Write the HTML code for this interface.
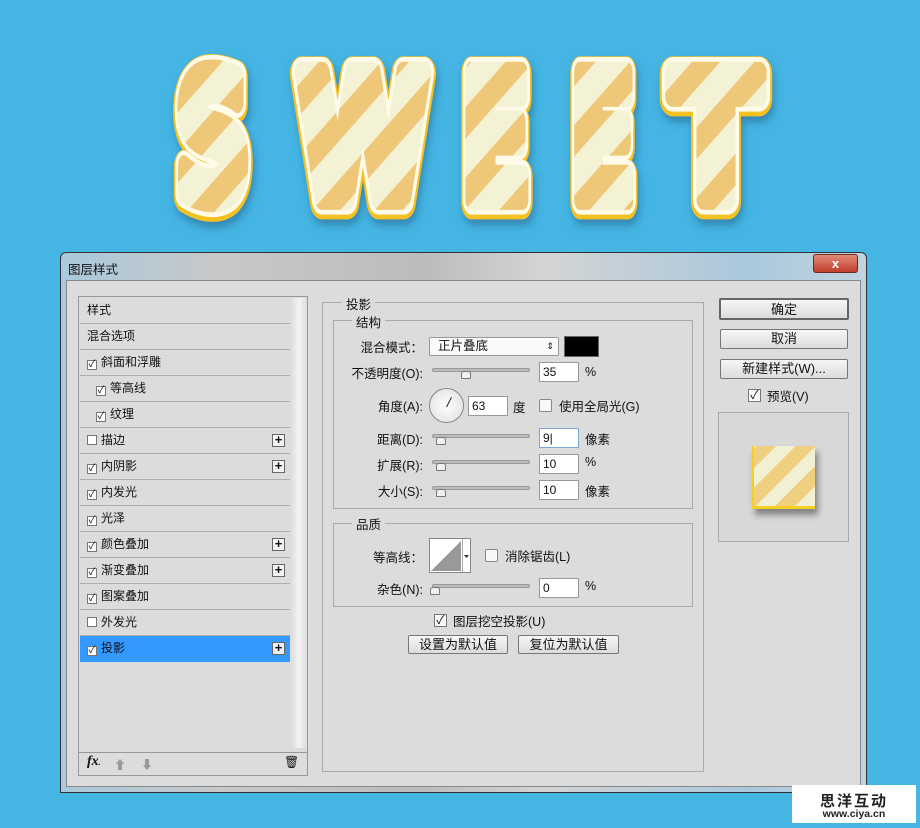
<!DOCTYPE html>
<html><head><meta charset="utf-8"><style>
*{margin:0;padding:0;box-sizing:border-box}
body{width:920px;height:828px;background:#45b5e3;position:relative;overflow:hidden;font-family:"Liberation Sans","Noto Sans CJK SC",sans-serif;font-size:12px;color:#111}
.a{position:absolute}
.row{position:absolute;left:80px;width:210px;height:26px;border-bottom:1px solid #aeaeae;line-height:25px;padding-left:7px}
.cb{display:inline-block;width:10px;height:10px;border:1px solid #777;background:#fff;vertical-align:-1px;margin-right:4px;font-size:10px;line-height:8px;text-align:center}
.plus{position:absolute;right:5px;top:6px;width:13px;height:13px;border:1px solid #666;background:#f4f4f4;font-size:13px;line-height:10px;text-align:center;font-weight:bold}
.btn{position:absolute;border:1px solid #777;border-radius:2px;background:linear-gradient(#f6f6f6,#dcdcdc);text-align:center;font-size:13px}
.lbl{position:absolute;text-align:right;width:95px;font-size:12.5px}
.sl{position:absolute;left:432px;width:98px;height:4px;border-radius:2px;background:#bbb;border:1px solid #999}
.th{position:absolute;width:10px;height:8px;border:1px solid #777;background:#f0f0f0;border-radius:3px 3px 1px 1px}
.inp{position:absolute;left:539px;width:40px;height:20px;background:#fff;border:1px solid #999;padding-left:3px;line-height:18px;font-size:12px}
.unit{position:absolute;left:585px;font-size:12.5px}
</style></head><body>
<svg class="a" style="left:0;top:0" width="920" height="240">
<defs>
<pattern id="st" width="40" height="40" patternUnits="userSpaceOnUse" patternTransform="rotate(-40)">
<rect width="40" height="40" fill="#f4f2d4"/><rect width="40" height="18" fill="#eec878"/></pattern>
<filter id="sh"><feDropShadow dx="2" dy="6" stdDeviation="4" flood-color="#1a5a80" flood-opacity="0.5"/></filter>
<g id="t" font-family="DejaVu Sans" font-weight="bold" font-size="130" transform="scale(1,1.35)">
<text x="176" y="148" textLength="74" lengthAdjust="spacingAndGlyphs">S</text>
<text x="298" y="148" textLength="130" lengthAdjust="spacingAndGlyphs">W</text>
<text x="462" y="148" textLength="68" lengthAdjust="spacingAndGlyphs">E</text>
<text x="571" y="148" textLength="64" lengthAdjust="spacingAndGlyphs">E</text>
<text x="672" y="148" textLength="88" lengthAdjust="spacingAndGlyphs">T</text></g>
</defs>
<g filter="url(#sh)" stroke-linejoin="round" stroke-linecap="round">
<use href="#t" stroke="#f5c020" stroke-width="26" fill="#f5c020" transform="translate(0,2)"/>
<use href="#t" stroke="#fffbe8" stroke-width="22" fill="#fffbe8"/>
<use href="#t" stroke="url(#st)" stroke-width="15" fill="url(#st)"/>
</g></svg>

<!-- window -->
<div class="a" style="left:60px;top:252px;width:807px;height:541px;border:1px solid #333;border-radius:6px 6px 0 0;background:linear-gradient(90deg,#a9c9dc,#c8c8c8 20%,#bcbcbc 45%,#d4d4d4 60%,#aac8dc 85%,#c0d4e0)"></div>
<div class="a" style="left:68px;top:259px;font-size:12.5px">图层样式</div>
<div class="a" style="left:813px;top:254px;width:45px;height:19px;border:1px solid #6b2a20;border-radius:3px;background:linear-gradient(#e08a78,#c0402c);color:#fff;text-align:center;font-weight:bold;font-size:13px;line-height:17px">x</div>
<div class="a" style="left:66px;top:280px;width:795px;height:507px;background:#dcdcdc;border:1px solid #888"></div>

<!-- left list -->
<div class="a" style="left:78px;top:296px;width:230px;height:480px;border:1px solid #999;background:#dcdcdc"></div>
<div class="a" style="left:291px;top:298px;width:16px;height:450px;background:linear-gradient(90deg,#dcdcdc,#f4f4f4,#dcdcdc)"></div>
<div class="row" style="top:298px">样式</div>
<div class="row" style="top:324px">混合选项</div>
<div class="row" style="top:350px"><span class="cb">✓</span>斜面和浮雕</div>
<div class="row" style="top:376px;padding-left:16px"><span class="cb">✓</span>等高线</div>
<div class="row" style="top:402px;padding-left:16px"><span class="cb">✓</span>纹理</div>
<div class="row" style="top:428px"><span class="cb"></span>描边<span class="plus">+</span></div>
<div class="row" style="top:454px"><span class="cb">✓</span>内阴影<span class="plus">+</span></div>
<div class="row" style="top:480px"><span class="cb">✓</span>内发光</div>
<div class="row" style="top:506px"><span class="cb">✓</span>光泽</div>
<div class="row" style="top:532px"><span class="cb">✓</span>颜色叠加<span class="plus">+</span></div>
<div class="row" style="top:558px"><span class="cb">✓</span>渐变叠加<span class="plus">+</span></div>
<div class="row" style="top:584px"><span class="cb">✓</span>图案叠加</div>
<div class="row" style="top:610px"><span class="cb"></span>外发光</div>
<div class="row" style="top:636px;background:#3399ff;border-bottom:none"><span class="cb">✓</span>投影<span class="plus" style="background:#e8f0ff">+</span></div>
<div class="a" style="left:79px;top:752px;width:228px;border-top:1px solid #999"></div>
<div class="a" style="left:87px;top:754px;font-family:'Liberation Serif',serif;font-style:italic;font-weight:bold;font-size:14px">fx<span style="font-size:8px">.</span></div>
<div class="a" style="left:114px;top:756px;color:#999;font-size:12px">⬆</div>
<div class="a" style="left:141px;top:756px;color:#999;font-size:12px">⬇</div>
<div class="a" style="left:284px;top:755px;font-size:12px">🗑</div>

<!-- middle -->
<div class="a" style="left:322px;top:302px;width:382px;height:470px;border:1px solid #aaa"></div>
<div class="a" style="left:342px;top:294px;background:#dcdcdc;padding:0 4px;font-size:12.5px">投影</div>
<div class="a" style="left:333px;top:320px;width:360px;height:189px;border:1px solid #aaa"></div>
<div class="a" style="left:352px;top:312px;background:#dcdcdc;padding:0 4px;font-size:12.5px">结构</div>
<div class="lbl" style="left:328px;top:337px">混合模式：</div>
<div class="a" style="left:429px;top:337px;width:130px;height:19px;border:1px solid #999;border-radius:2px;background:#fafafa;padding-left:8px;line-height:17px;font-size:12.5px">正片叠底<span style="position:absolute;right:4px;font-size:9px">⇕</span></div>
<div class="a" style="left:564px;top:336px;width:35px;height:21px;background:#000;border:1px solid #666"></div>
<div class="lbl" style="left:328px;top:363px">不透明度(O):</div>
<div class="sl" style="top:368px"></div><div class="th" style="left:461px;top:371px"></div>
<div class="inp" style="top:362px">35</div><div class="unit" style="top:365px">%</div>
<div class="lbl" style="left:328px;top:396px">角度(A):</div>
<div class="a" style="left:429px;top:388px;width:35px;height:35px;border-radius:50%;border:1px solid #888;background:radial-gradient(#fff,#ddd)"></div>
<div class="a" style="left:446px;top:396px;width:1px;height:11px;background:#222;transform:rotate(27deg);transform-origin:bottom"></div>
<div class="inp" style="left:468px;top:396px">63</div>
<div class="a" style="left:513px;top:397px;font-size:12.5px">度</div>
<div class="a" style="left:539px;top:399px;width:13px;height:13px;border:1px solid #888;background:#f8f8f8;border-radius:2px"></div>
<div class="a" style="left:559px;top:396px;font-size:12.5px">使用全局光(G)</div>
<div class="lbl" style="left:328px;top:429px">距离(D):</div>
<div class="sl" style="top:434px"></div><div class="th" style="left:436px;top:437px"></div>
<div class="inp" style="top:428px;border-color:#7aa6d8">9|</div><div class="unit" style="top:429px">像素</div>
<div class="lbl" style="left:328px;top:455px">扩展(R):</div>
<div class="sl" style="top:460px"></div><div class="th" style="left:436px;top:463px"></div>
<div class="inp" style="top:454px">10</div><div class="unit" style="top:455px">%</div>
<div class="lbl" style="left:328px;top:481px">大小(S):</div>
<div class="sl" style="top:486px"></div><div class="th" style="left:436px;top:489px"></div>
<div class="inp" style="top:480px">10</div><div class="unit" style="top:481px">像素</div>

<div class="a" style="left:333px;top:523px;width:360px;height:84px;border:1px solid #aaa"></div>
<div class="a" style="left:352px;top:514px;background:#dcdcdc;padding:0 4px;font-size:12.5px">品质</div>
<div class="lbl" style="left:328px;top:547px">等高线：</div>
<svg class="a" style="left:429px;top:538px" width="42" height="35"><rect x=".5" y=".5" width="41" height="34" fill="#fff" stroke="#888"/><polygon points="2,33 32,3 32,33" fill="#999"/><line x1="33.5" y1="1" x2="33.5" y2="34" stroke="#aaa"/><polygon points="35,17 40,17 37.5,20" fill="#333"/></svg>
<div class="a" style="left:485px;top:549px;width:13px;height:13px;border:1px solid #888;background:#f8f8f8;border-radius:2px"></div>
<div class="a" style="left:505px;top:546px;font-size:12.5px">消除锯齿(L)</div>
<div class="lbl" style="left:328px;top:579px">杂色(N):</div>
<div class="sl" style="top:584px"></div><div class="th" style="left:430px;top:587px"></div>
<div class="inp" style="top:578px">0</div><div class="unit" style="top:579px">%</div>
<div class="a" style="left:434px;top:614px;width:13px;height:13px;border:1px solid #777;background:#fafafa;font-size:12px;line-height:11px;text-align:center">✓</div>
<div class="a" style="left:453px;top:611px;font-size:12.5px">图层挖空投影(U)</div>
<div class="btn" style="left:408px;top:635px;width:100px;height:19px;line-height:17px">设置为默认值</div>
<div class="btn" style="left:518px;top:635px;width:101px;height:19px;line-height:17px">复位为默认值</div>

<!-- right -->
<div class="btn" style="left:719px;top:298px;width:130px;height:22px;line-height:19px;border:2px solid #666">确定</div>
<div class="btn" style="left:720px;top:329px;width:128px;height:20px;line-height:18px">取消</div>
<div class="btn" style="left:720px;top:359px;width:128px;height:20px;line-height:18px">新建样式(W)...</div>
<div class="a" style="left:748px;top:389px;width:13px;height:13px;border:1px solid #777;background:#fafafa;font-size:12px;line-height:11px;text-align:center">✓</div>
<div class="a" style="left:767px;top:386px;font-size:12.5px">预览(V)</div>
<div class="a" style="left:718px;top:412px;width:131px;height:130px;border:1px solid #aaa;background:#d8d8d8"></div>
<div class="a" style="left:752px;top:446px;width:63px;height:63px;background:repeating-linear-gradient(-45deg,#f2f0d2 0 14px,#f0cf80 14px 28px);box-shadow:3px 6px 6px rgba(0,0,0,.4);border-bottom:3px solid #f5d020;border-left:2px solid #f5d020"></div>

<!-- watermark -->
<div class="a" style="left:792px;top:785px;width:124px;height:38px;background:#fff"></div>
<div class="a" style="left:792px;top:790px;width:124px;text-align:center;font-weight:bold;font-size:15px;letter-spacing:2px;color:#222">思洋互动</div>
<div class="a" style="left:792px;top:808px;width:124px;text-align:center;font-weight:bold;font-size:10.5px;color:#222">www.ciya.cn</div>
</body></html>
